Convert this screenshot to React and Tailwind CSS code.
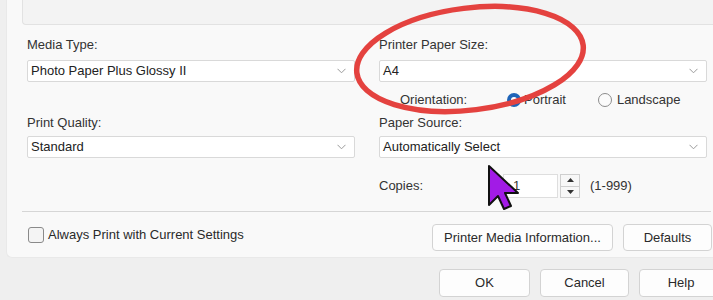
import React from "react";

const font = { fontFamily: '"Liberation Sans", Arial, sans-serif' };

function Chevron() {
    return <svg width="9" height="6" viewBox="0 0 9 6" className="shrink-0">
        <path d="M0.5 0.8 L4.5 4.8 L8.5 0.8" fill="none" stroke="#9a9a9a" strokeWidth="1" />
    </svg>
}

function Select({ value }) {
    return <div className="flex items-center justify-between h-[22px] bg-white border border-[#d9d9d9] rounded-[2px] pl-[3px] pr-[8px] text-[13px] text-[#222]">
        <span>{value}</span>
        <Chevron />
    </div>
}

function Button({ children, className = "" }) {
    return <div className={"flex items-center justify-center bg-[#fdfdfd] border border-[#d3d3d3] rounded-[4px] text-[13px] text-[#2a2a2a] " + className}>
        {children}
    </div>
}

export default function App() {
    return <div className="relative w-[713px] h-[300px] bg-[#efefef] overflow-hidden" style={font}>
        <div className="ml-[6px] h-[258px] bg-[#f9f9f9] border-l border-b border-[#e9e9e9] rounded-bl-[6px] flex flex-col">
            <div className="ml-[15px] w-[720px] h-[25px] bg-[#f3f3f3] border-l border-b border-[#e2e2e2] rounded-bl-[4px] shrink-0" />

            <div className="flex gap-[24px] pl-[20px] mt-[12px]">
                <div className="w-[328px] flex flex-col">
                    <div className="h-[16px] leading-[16px] text-[13px] text-[#333]">Media Type:</div>
                    <div className="mt-[7px]"><Select value="Photo Paper Plus Glossy II" /></div>
                    <div className="h-[20px] mt-[8px]" />
                    <div className="h-[16px] leading-[16px] text-[13px] text-[#333] mt-[5px]">Print Quality:</div>
                    <div className="mt-[5px]"><Select value="Standard" /></div>
                </div>
                <div className="w-[328px] flex flex-col">
                    <div className="h-[16px] leading-[16px] text-[13px] text-[#333]">Printer Paper Size:</div>
                    <div className="mt-[7px]"><Select value="A4" /></div>
                    <div className="h-[20px] mt-[8px] flex items-center text-[13px] text-[#333]">
                        <span className="ml-[21px] w-[107px]">Orientation:</span>
                        <span className="w-[14px] h-[14px] rounded-full bg-[#1f64b8] flex items-center justify-center">
                            <span className="w-[6px] h-[6px] rounded-full bg-white" />
                        </span>
                        <span className="ml-[3px]">Portrait</span>
                        <span className="ml-[32px] w-[14px] h-[14px] rounded-full border border-[#8c8c8c] bg-[#fbfbfb]" />
                        <span className="ml-[5px]">Landscape</span>
                    </div>
                    <div className="h-[16px] leading-[16px] text-[13px] text-[#333] mt-[5px]">Paper Source:</div>
                    <div className="mt-[5px]"><Select value="Automatically Select" /></div>
                    <div className="h-[24px] mt-[16px] flex items-center text-[13px] text-[#333]">
                        <span className="w-[124px]">Copies:</span>
                        <div className="flex h-[24px]">
                            <div className="w-[55px] bg-white border border-[#dedede] pl-[9px] flex items-center">1</div>
                            <div className="ml-[2px] w-[20px] flex flex-col bg-[#f7f7f7] border border-[#cfcfcf]">
                                <div className="flex-1 flex items-center justify-center border-b border-[#cfcfcf]">
                                    <svg width="7" height="4" viewBox="0 0 7 4"><path d="M0 4 L3.5 0 L7 4Z" fill="#333" /></svg>
                                </div>
                                <div className="flex-1 flex items-center justify-center">
                                    <svg width="7" height="4" viewBox="0 0 7 4"><path d="M0 0 L3.5 4 L7 0Z" fill="#333" /></svg>
                                </div>
                            </div>
                        </div>
                        <span className="ml-[10px]">(1-999)</span>
                    </div>
                </div>
            </div>

            <div className="ml-[15px] w-[689px] h-px bg-[#d6d6d6] mt-[13px]" />

            <div className="flex items-center mt-[12px] pl-[21px] pr-px h-[27px]">
                <span className="w-[16px] h-[16px] rounded-[3px] border border-[#8a8a8a] bg-[#f4f4f4] -mt-[6px]" />
                <span className="ml-[4px] text-[13px] text-[#2a2a2a] -mt-[5px]">Always Print with Current Settings</span>
                <div className="ml-auto flex gap-[10px]">
                    <Button className="w-[181px] h-[27px]">Printer Media Information...</Button>
                    <Button className="w-[89px] h-[27px]">Defaults</Button>
                </div>
            </div>
        </div>

        <div className="flex justify-end gap-[10px] mt-[11px] pl-[439px] -mr-[10px]">
            <Button className="w-[91px] h-[28px] border-[#8fb0d4]">OK</Button>
            <Button className="w-[89px] h-[28px]">Cancel</Button>
            <Button className="w-[84px] h-[28px]">Help</Button>
        </div>

        <svg className="absolute left-0 top-0 pointer-events-none" width="713" height="300">
            <ellipse cx="470" cy="59" rx="114" ry="51" transform="rotate(-7 470 59)" fill="none" stroke="#e4423f" strokeWidth="5.5" />
        </svg>

        <svg className="absolute left-[487px] top-[164px] pointer-events-none" width="34" height="48" viewBox="0 0 34 48">
            <path d="M2 2 L2 41 L11 32 L17 45 L24 42 L18 29 L31 29 Z" fill="#a21be6" stroke="#111" strokeWidth="2" strokeLinejoin="round" />
        </svg>
    </div>
}
